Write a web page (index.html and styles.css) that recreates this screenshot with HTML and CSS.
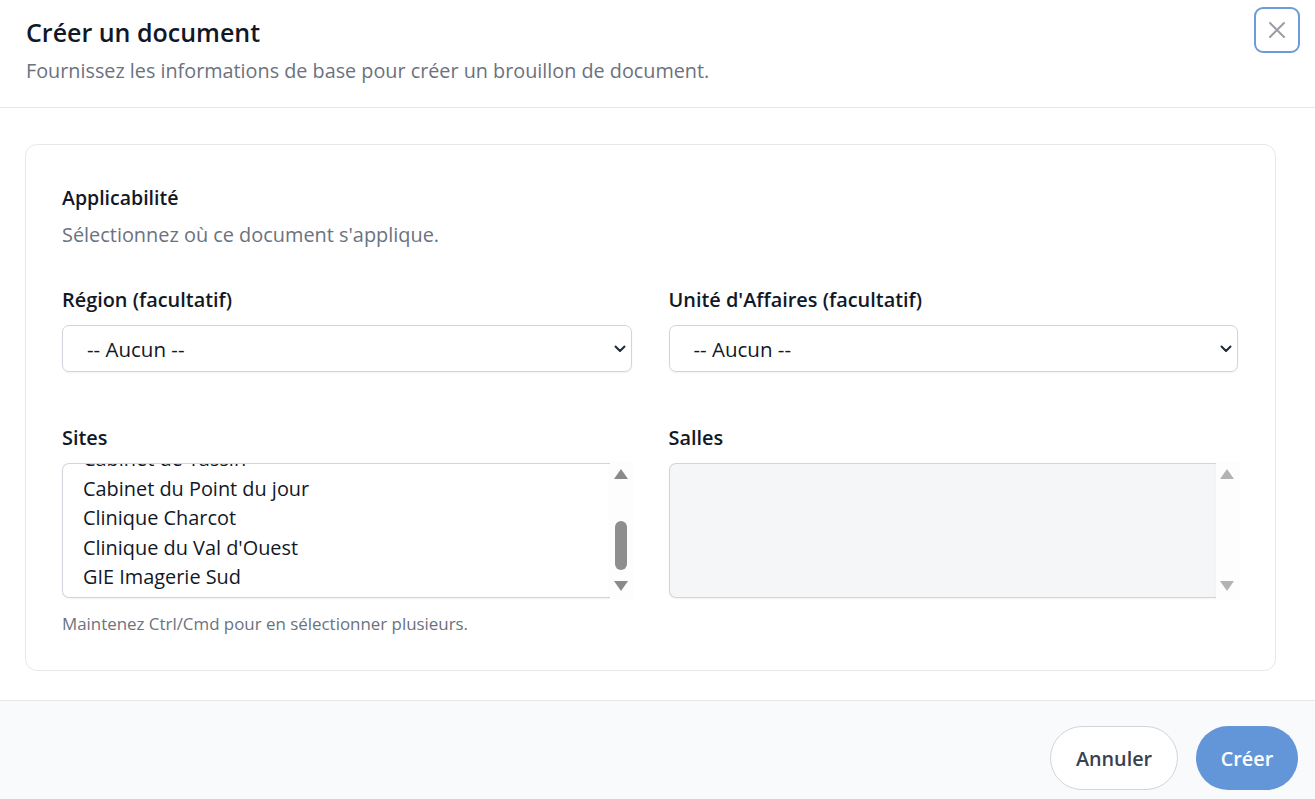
FILE: index.html
```html
<!DOCTYPE html>
<html lang="fr">
<head>
    <meta charset="UTF-8">
    <title>Créer un document</title>
    <link rel="stylesheet" href="styles.css">
</head>
<body>
    <div class="modal">
        <header class="modal-header">
            <div class="modal-titles">
                <h1>Créer un document</h1>
                <p>Fournissez les informations de base pour créer un brouillon de document.</p>
            </div>
            <button class="close-btn" aria-label="Fermer">
                <svg width="20" height="20" viewBox="0 0 20 20" fill="none" stroke="#9a9ea6" stroke-width="2" stroke-linecap="round">
                    <path d="M3 3 L17 17 M17 3 L3 17"/>
                </svg>
            </button>
        </header>

        <main class="modal-body">
            <section class="card">
                <h2>Applicabilité</h2>
                <p class="card-sub">Sélectionnez où ce document s'applique.</p>

                <div class="grid">
                    <div class="field">
                        <label>Région (facultatif)</label>
                        <div class="select">
                            <span>-- Aucun --</span>
                            <svg width="12" height="8" viewBox="0 0 12 8" fill="none" stroke="#1f2937" stroke-width="2" stroke-linecap="round" stroke-linejoin="round"><path d="M1.5 1.5 L6 6 L10.5 1.5"/></svg>
                        </div>
                    </div>
                    <div class="field">
                        <label>Unité d'Affaires (facultatif)</label>
                        <div class="select">
                            <span>-- Aucun --</span>
                            <svg width="12" height="8" viewBox="0 0 12 8" fill="none" stroke="#1f2937" stroke-width="2" stroke-linecap="round" stroke-linejoin="round"><path d="M1.5 1.5 L6 6 L10.5 1.5"/></svg>
                        </div>
                    </div>

                    <div class="field field-list">
                        <label>Sites</label>
                        <div class="listbox">
                            <div class="list-view">
                                <ul class="list-items">
                                    <li>Cabinet de Tassin</li>
                                    <li>Cabinet du Point du jour</li>
                                    <li>Clinique Charcot</li>
                                    <li>Clinique du Val d'Ouest</li>
                                    <li>GIE Imagerie Sud</li>
                                </ul>
                            </div>
                            <div class="scrollbar">
                                <span class="arrow up"></span>
                                <div class="track"><span class="thumb"></span></div>
                                <span class="arrow down"></span>
                            </div>
                        </div>
                        <p class="help">Maintenez Ctrl/Cmd pour en sélectionner plusieurs.</p>
                    </div>
                    <div class="field field-list">
                        <label>Salles</label>
                        <div class="listbox disabled">
                            <div class="list-view"></div>
                            <div class="scrollbar">
                                <span class="arrow up"></span>
                                <div class="track"></div>
                                <span class="arrow down"></span>
                            </div>
                        </div>
                    </div>
                </div>
            </section>
        </main>

        <footer class="modal-footer">
            <button class="btn btn-cancel">Annuler</button>
            <button class="btn btn-primary">Créer</button>
        </footer>
    </div>
</body>
</html>
```

FILE: styles.css
```css
html, body {
    margin: 0;
    padding: 0;
    height: 100%;
}
body {
    font-family: "Open Sans", "Noto Sans", Arial, sans-serif;
    background-color: #fff;
    color: #111827;
    overflow: hidden;
}
.modal {
    display: flex;
    flex-direction: column;
    height: 100%;
}

/* header */
.modal-header {
    display: flex;
    justify-content: space-between;
    align-items: flex-start;
    padding: 7px 15px 0 26px;
    height: 108px;
    flex-shrink: 0;
    box-sizing: border-box;
    border-bottom: 1px solid #e5e7eb;
}
.modal-titles {
    padding-top: 9px;
}
.modal-titles h1 {
    margin: 0;
    font-size: 25px;
    line-height: 32px;
    font-weight: 600;
    color: #111827;
}
.modal-titles p {
    margin: 9px 0 0;
    font-size: 19.8px;
    line-height: 27px;
    color: #6b7280;
}
.close-btn {
    width: 46px;
    height: 46px;
    border: 2px solid #6b9bd9;
    border-radius: 9px;
    background: #fff;
    display: flex;
    align-items: center;
    justify-content: center;
    padding: 0;
    cursor: pointer;
}

/* body */
.modal-body {
    flex: 1;
    padding: 36px 39px 0 25px;
}
.card {
    border: 1px solid #e5e7eb;
    border-radius: 12px;
    padding: 39px 37px 36px 36px;
}
.card h2 {
    margin: 0;
    font-size: 19.5px;
    line-height: 27px;
    font-weight: 600;
    color: #111827;
}
.card-sub {
    margin: 10px 0 0;
    font-size: 19.9px;
    line-height: 27px;
    color: #6b7280;
}
.grid {
    display: grid;
    grid-template-columns: 1fr 1fr;
    column-gap: 37px;
    row-gap: 52px;
    margin-top: 38px;
}
.field label {
    display: block;
    font-size: 19.9px;
    line-height: 27px;
    font-weight: 600;
    color: #111827;
    margin-bottom: 12px;
}
.select {
    height: 47px;
    box-sizing: border-box;
    border: 1px solid #d1d5db;
    border-radius: 7px;
    box-shadow: 0 1px 2px rgba(0,0,0,0.06);
    display: flex;
    align-items: center;
    justify-content: space-between;
    padding: 0 5px 0 24px;
    font-size: 20.5px;
    color: #111827;
}

/* multi-select boxes */
.listbox {
    display: flex;
    height: 135px;
}
.list-view {
    flex: 1;
    border: 1px solid #d1d5db;
    border-right: none;
    border-radius: 7px 0 0 7px;
    overflow: hidden;
    box-shadow: 0 1px 2px rgba(0,0,0,0.05);
}
.listbox.disabled .list-view {
    background-color: #f5f6f8;
}
.list-items {
    list-style: none;
    margin: -20px 0 0;
    padding: 0;
}
.list-items li {
    padding: 0 20px;
    font-size: 19.9px;
    line-height: 29.5px;
    color: #111827;
}
.scrollbar {
    width: 22px;
    display: flex;
    flex-direction: column;
    align-items: center;
    background-color: #fdfdfd;
    box-shadow: 0 0 3px rgba(0,0,0,0.04);
}
.track {
    flex: 1;
    width: 100%;
    display: flex;
    justify-content: center;
}
.thumb {
    width: 12px;
    height: 49px;
    margin-top: 42px;
    border-radius: 6px;
    background-color: #8e8e8e;
}
.arrow {
    width: 0;
    height: 0;
    border-left: 7px solid transparent;
    border-right: 7px solid transparent;
}
.arrow.up {
    margin-top: 6px;
    border-bottom: 10px solid #8a8a8a;
}
.arrow.down {
    margin-bottom: 7px;
    border-top: 10px solid #8a8a8a;
}
.listbox.disabled .arrow.up {
    border-bottom-color: #b3b3b3;
}
.listbox.disabled .arrow.down {
    border-top-color: #b3b3b3;
}
.help {
    margin: 16px 0 0;
    font-size: 16.9px;
    line-height: 20px;
    color: #6b7280;
}

/* footer */
.modal-footer {
    display: flex;
    justify-content: flex-end;
    align-items: flex-start;
    gap: 18px;
    height: 99px;
    flex-shrink: 0;
    box-sizing: border-box;
    padding: 25px 17px 0;
    border-top: 1px solid #e5e7eb;
    background-color: #f9fafb;
}
.btn {
    height: 64px;
    border-radius: 32px;
    font-family: inherit;
    font-size: 19.8px;
    font-weight: 600;
    cursor: pointer;
}
.btn-cancel {
    width: 128px;
    background: #fff;
    border: 1px solid #d1d5db;
    color: #374151;
}
.btn-primary {
    width: 102px;
    background-color: #6396d9;
    border: none;
    color: #fff;
}
```
